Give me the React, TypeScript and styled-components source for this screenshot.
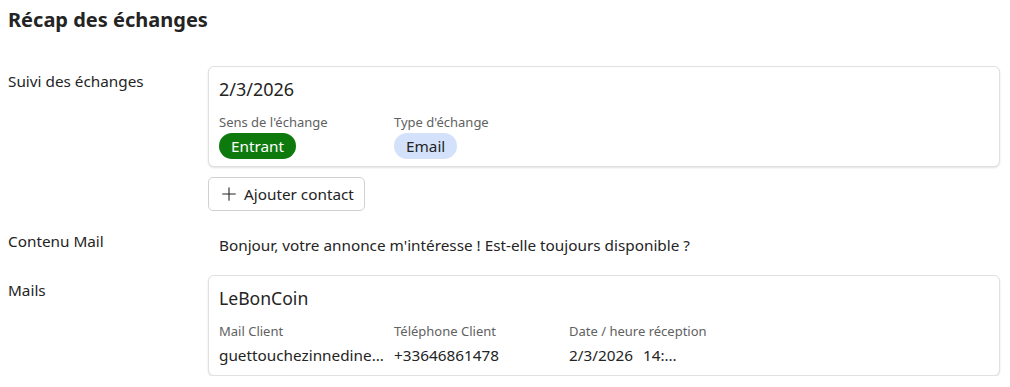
import { FC } from "react";
import styled, { createGlobalStyle } from "styled-components";

const GlobalStyle = createGlobalStyle`
    body {
        margin: 0;
        background: #fff;
        font-family: "Noto Sans", "Open Sans", sans-serif;
        color: #242424;
    }
`;

const Page = styled.div`
    padding: 6px 10px 0 8px;
    display: flex;
    flex-direction: column;
`;

const Title = styled.h2`
    margin: 0 0 32px 0;
    font-size: 20px;
    line-height: 28px;
    font-weight: 700;
    color: #242424;
`;

const FieldRow = styled.div<{ $gap?: number }>`
    display: grid;
    grid-template-columns: 200px 1fr;
    margin-bottom: ${(p) => p.$gap ?? 0}px;
`;

const FieldLabel = styled.div`
    font-size: 15.3px;
    line-height: 20px;
    color: #242424;
    padding-top: 5px;
`;

const FieldValue = styled.div`
    display: flex;
    flex-direction: column;
    align-items: flex-start;
    gap: 10px;
    min-width: 0;
`;

const Card = styled.div`
    align-self: stretch;
    border: 1px solid #e0e0e0;
    border-radius: 6px;
    box-shadow: 0 1px 2px rgba(0, 0, 0, 0.12);
    padding: 10px 10px 7px 10px;
    background: #fff;
`;

const CardTitle = styled.div<{ $size: number }>`
    font-size: ${(p) => p.$size}px;
    line-height: 24px;
    color: #242424;
    margin-bottom: 12px;
`;

const Columns = styled.div`
    display: flex;
    gap: 10px;
`;

const Column = styled.div`
    width: 165px;
    display: flex;
    flex-direction: column;
    align-items: flex-start;
    min-width: 0;
`;

const SmallLabel = styled.div`
    font-size: 13px;
    line-height: 18px;
    color: #616161;
    margin-bottom: 2px;
`;

const Value = styled.div`
    font-size: 15.3px;
    line-height: 26px;
    color: #242424;
    width: 100%;
    white-space: nowrap;
    overflow: hidden;
    text-overflow: ellipsis;
`;

const DateTime = styled.div`
    display: flex;
    gap: 10px;
    font-size: 15.3px;
    line-height: 26px;
    color: #242424;
`;

const Time = styled.span`
    width: 36px;
    white-space: nowrap;
    overflow: hidden;
    text-overflow: ellipsis;
`;

const Badge = styled.span<{ $tone: "success" | "info" }>`
    display: inline-flex;
    align-items: center;
    height: 26px;
    padding: 0 12px;
    border-radius: 13px;
    font-size: 15.3px;
    background: ${(p) => (p.$tone === "success" ? "#0e7a0d" : "#d3e2fa")};
    color: ${(p) => (p.$tone === "success" ? "#fff" : "#242424")};
`;

const Button = styled.button`
    display: inline-flex;
    align-items: center;
    gap: 6px;
    height: 34px;
    padding: 0 10px 0 11px;
    border: 1px solid #d1d1d1;
    border-radius: 5px;
    background: #fff;
    font-family: inherit;
    font-size: 15.3px;
    color: #242424;
    cursor: pointer;
    margin-bottom: 15px;

    & > svg {
        width: 18px;
        height: 18px;
    }
`;

const Message = styled.div`
    font-size: 15.3px;
    line-height: 20px;
    padding: 9px 0 0 11px;
`;

const PlusIcon: FC = () => (
    <svg viewBox="0 0 20 20" fill="none" stroke="#242424" strokeWidth="1.2" strokeLinecap="round">
        <path d="M10 3v14M3 10h14" />
    </svg>
);

const App: FC = () => {
    return (
        <Page>
            <GlobalStyle />
            <Title>Récap des échanges</Title>

            <FieldRow>
                <FieldLabel>Suivi des échanges</FieldLabel>
                <FieldValue>
                    <Card>
                        <CardTitle $size={18}>2/3/2026</CardTitle>
                        <Columns>
                            <Column>
                                <SmallLabel>Sens de l'échange</SmallLabel>
                                <Badge $tone="success">Entrant</Badge>
                            </Column>
                            <Column>
                                <SmallLabel>Type d'échange</SmallLabel>
                                <Badge $tone="info">Email</Badge>
                            </Column>
                        </Columns>
                    </Card>
                    <Button>
                        <PlusIcon />
                        Ajouter contact
                    </Button>
                </FieldValue>
            </FieldRow>

            <FieldRow $gap={20}>
                <FieldLabel>Contenu Mail</FieldLabel>
                <Message>Bonjour, votre annonce m'intéresse ! Est-elle toujours disponible ?</Message>
            </FieldRow>

            <FieldRow>
                <FieldLabel>Mails</FieldLabel>
                <FieldValue>
                    <Card>
                        <CardTitle $size={17.6}>LeBonCoin</CardTitle>
                        <Columns>
                            <Column>
                                <SmallLabel>Mail Client</SmallLabel>
                                <Value>guettouchezinnedine@gmail.com</Value>
                            </Column>
                            <Column>
                                <SmallLabel>Téléphone Client</SmallLabel>
                                <Value>+33646861478</Value>
                            </Column>
                            <Column>
                                <SmallLabel>Date / heure réception</SmallLabel>
                                <DateTime>
                                    <span>2/3/2026</span>
                                    <Time>14:32</Time>
                                </DateTime>
                            </Column>
                        </Columns>
                    </Card>
                </FieldValue>
            </FieldRow>
        </Page>
    );
};

export default App;
